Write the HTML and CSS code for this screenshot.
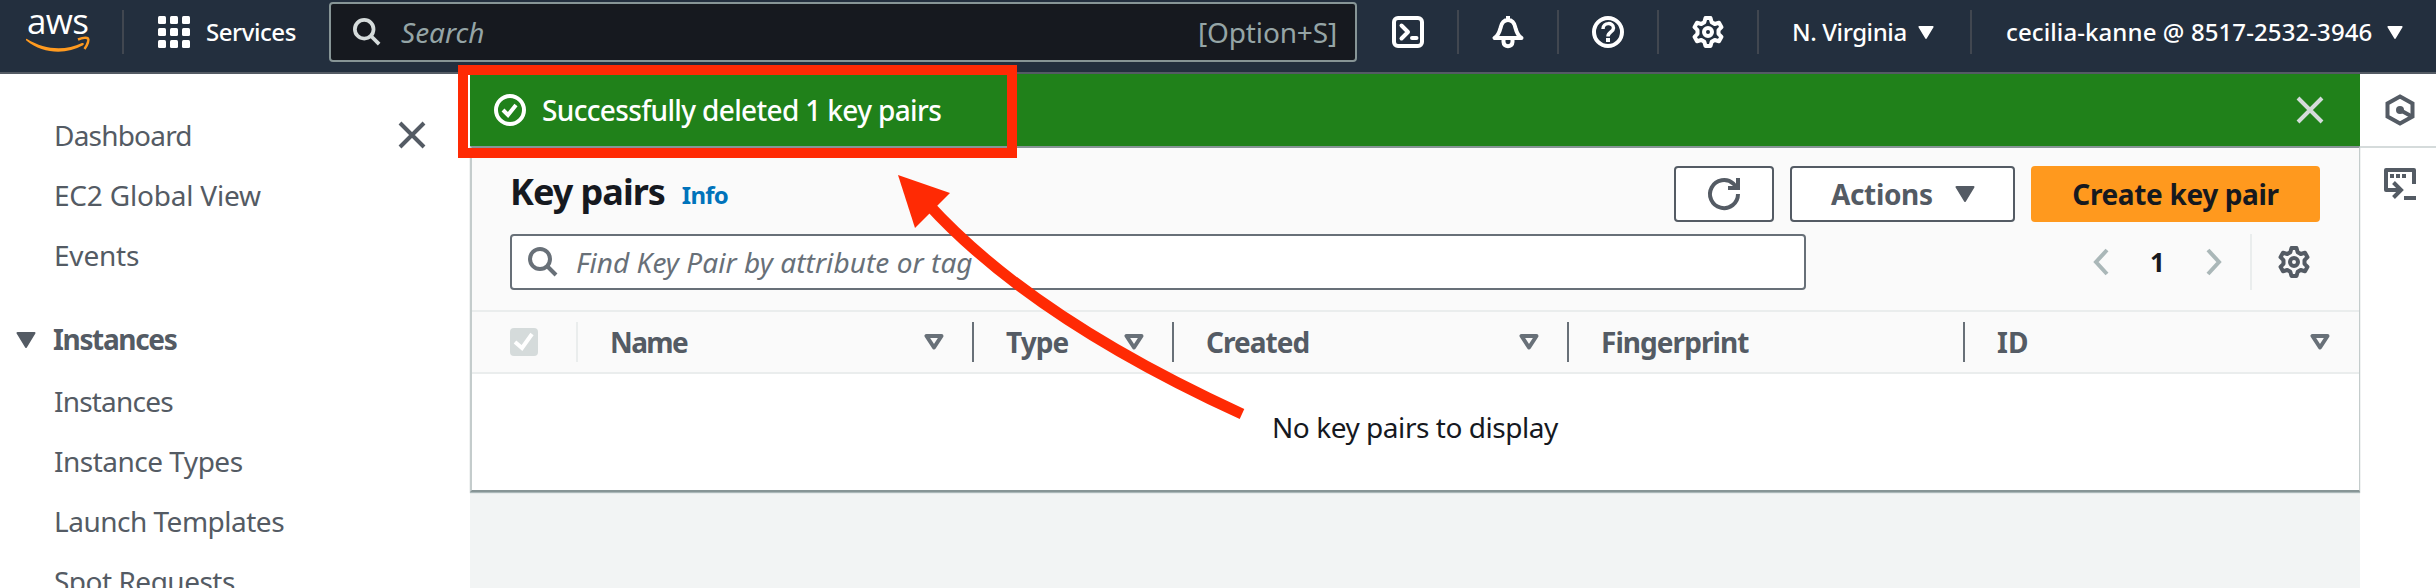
FILE: index.html
```html
<!DOCTYPE html>
<html lang="en">
<head>
<meta charset="utf-8">
<title>Key pairs | EC2</title>
<link rel="stylesheet" href="styles.css">
</head>
<body>
<svg class="defs" width="0" height="0">
  <symbol id="gear" viewBox="0 0 32 32"><path d="M13.500 2h5l1.200 4.200 3 1.800 4.300-1.200 2.500 4.400-3 3v3.600l3 3-2.500 4.400-4.300-1.200-3 1.800L18.500 30h-5l-1.200-4.200-3-1.800L5 25.200l-2.500-4.400 3-3v-3.600l-3-3L5 6.800 9.300 8l3-1.800z" fill="none" stroke="currentColor" stroke-width="4" stroke-linejoin="round"/><circle cx="16" cy="16" r="4" fill="none" stroke="currentColor" stroke-width="4"/></symbol>
  <symbol id="search" viewBox="0 0 30 30"><circle cx="12" cy="12" r="10" fill="none" stroke="currentColor" stroke-width="4"/><path d="M19 19l9 9" stroke="currentColor" stroke-width="4"/></symbol>
  <symbol id="close" viewBox="0 0 28 28"><path d="M2 2l24 24M26 2L2 26" stroke="currentColor" stroke-width="4" fill="none"/></symbol>
  <symbol id="caret" viewBox="0 0 20 16"><path d="M1.500 1h17L10 15z" fill="currentColor" stroke="currentColor" stroke-width="2" stroke-linejoin="round"/></symbol>
  <symbol id="sort" viewBox="0 0 20 16"><path d="M2.500 2h15L10 13.500z" fill="none" stroke="currentColor" stroke-width="4" stroke-linejoin="round"/></symbol>
</svg>
<header class="nav">
  <div class="brand"><span class="aws">aws</span>
    <svg class="smile" viewBox="0 0 64 16"><path d="M1 2c18 11 38 12 55 4 2-.5 2.500 1 1 2.200C40 18 17 17 .3 3.500c-.8-1 0-2 .7-1.500z" fill="#ff9a1f"/><path d="M52 2.500c5-2 9-2 10-1s0 6-3.500 10.500" fill="none" stroke="#ff9a1f" stroke-width="2.500"/></svg>
  </div>
  <i class="rule"></i>
  <svg class="grid" viewBox="0 0 32 32" fill="#fff"><rect width="8" height="8" rx="1.500"/><rect x="12" width="8" height="8" rx="1.500"/><rect x="24" width="8" height="8" rx="1.500"/><rect y="12" width="8" height="8" rx="1.500"/><rect x="12" y="12" width="8" height="8" rx="1.500"/><rect x="24" y="12" width="8" height="8" rx="1.500"/><rect y="24" width="8" height="8" rx="1.500"/><rect x="12" y="24" width="8" height="8" rx="1.500"/><rect x="24" y="24" width="8" height="8" rx="1.500"/></svg>
  <span class="services">Services</span>
  <div class="search"><svg class="s-icon"><use href="#search"/></svg><span class="s-text">Search</span><span class="s-key">[Option+S]</span></div>
  <div class="tools">
    <div class="tool"><svg viewBox="0 0 32 32"><rect x="2" y="2" width="28" height="28" rx="4"/><path d="M9.500 9.500L16 16l-6.500 6.500" stroke-linecap="round" stroke-linejoin="round"/><path d="M20 22h4.500" stroke-linecap="round"/></svg></div>
    <div class="tool"><svg viewBox="0 0 32 32"><path d="M16 0v4M2.500 22h27c-4-2.500-5-6-6-10-1-5-4-8-7.500-8s-6.500 3-7.500 8c-1 4-2 7.500-6 10z" stroke-linejoin="round"/><path d="M11.500 23v3c0 5.500 9 5.500 9 0v-3" stroke-width="4"/></svg></div>
    <div class="tool"><svg viewBox="0 0 32 32"><circle cx="16" cy="16" r="14"/><path d="M11 13c0-7 10.500-7 10.500-1 0 4-5.500 4-5.500 8.500" stroke-width="3.500"/><path d="M16 22v4"/></svg></div>
    <div class="tool"><svg><use href="#gear"/></svg></div>
  </div>
  <span class="region">N. Virginia</span><svg class="mini"><use href="#caret"/></svg>
  <i class="rule rule2"></i>
  <span class="account">cecilia-kanne @ 8517-2532-3946</span><svg class="mini"><use href="#caret"/></svg>
</header>
<div class="body">
  <nav class="side">
    <div class="link"><span class="tight-3">Dashboard</span><svg class="x"><use href="#close"/></svg></div>
    <div class="link"><span class="tight-1">EC2 Global View</span></div>
    <div class="link"><span class="tight-1">Events</span></div>
    <div class="group"><svg class="tri"><use href="#caret"/></svg><span class="tight-4">Instances</span></div>
    <div class="link"><span class="tight-3">Instances</span></div>
    <div class="link"><span class="tight-2">Instance Types</span></div>
    <div class="link"><span class="tight-2">Launch Templates</span></div>
    <div class="link"><span class="tight-2">Spot Requests</span></div>
  </nav>
  <main class="main">
    <div class="flash">
      <svg class="ok" viewBox="0 0 32 32" fill="none" stroke="#fff" stroke-width="4"><circle cx="16" cy="16" r="14"/><path d="M9 16l5 5 8-10"/></svg>
      <span class="flash-text">Successfully deleted 1 key pairs</span>
      <svg class="flash-x"><use href="#close"/></svg>
    </div>
    <section class="panel">
      <div class="title-row">
        <h1 class="title">Key pairs</h1><a class="info">Info</a>
        <div class="actions">
          <div class="btn refresh"><svg viewBox="0 0 32 32" fill="none" stroke="#545b64" stroke-width="4"><path d="M30 16a14 14 0 1 1-4.500-10.200l3 3.500"/><path d="M30 0v10H20"/></svg></div>
          <div class="btn act"><span>Actions</span><svg class="tri"><use href="#caret"/></svg></div>
          <div class="btn create"><span>Create key pair</span></div>
        </div>
      </div>
      <div class="filter-row">
        <div class="filter"><svg class="f-icon"><use href="#search"/></svg><span>Find Key Pair by attribute or tag</span></div>
        <div class="pager">
          <svg class="chev" viewBox="0 0 16 28"><path d="M14 2L3 14l11 12"/></svg><b class="page">1</b><svg class="chev" viewBox="0 0 16 28"><path d="M2 2l11 12L2 26"/></svg>
          <i class="vline"></i><svg class="cog"><use href="#gear"/></svg>
        </div>
      </div>
      <div class="thead">
        <div class="th check"><svg viewBox="0 0 28 28"><rect width="28" height="28" rx="4" fill="#d5dbdb"/><path d="M5 14l7 6L22 6" fill="none" stroke="#fff" stroke-width="4"/></svg></div>
        <div class="th"><span class="name">Name</span><svg class="tri"><use href="#sort"/></svg></div>
        <div class="th"><span>Type</span><svg class="tri"><use href="#sort"/></svg></div>
        <div class="th"><span>Created</span><svg class="tri"><use href="#sort"/></svg></div>
        <div class="th"><span>Fingerprint</span></div>
        <div class="th last"><span>ID</span><svg class="tri"><use href="#sort"/></svg></div>
      </div>
      <div class="empty"><span>No key pairs to display</span></div>
    </section>
  </main>
  <aside class="rail">
    <div class="rail-item"><svg viewBox="0 0 32 32" fill="none" stroke="#545b64" stroke-width="4"><path d="M16 2.500l12.500 7v13L16 29.500l-12.500-7v-13z"/><circle cx="16" cy="16" r="4" fill="#545b64" stroke="none"/><path d="M16 16l11 6"/></svg></div>
    <div class="rail-item"><svg viewBox="0 0 32 32" fill="none" stroke="#545b64" stroke-width="4"><path d="M30 16V2H2v20h14" stroke-linejoin="round"/><path d="M9.500 14.500L17 22l-7.500 7.500"/><path d="M20 30h12"/><path d="M6 8h4M12 8h4M18 8h4"/></svg></div>
  </aside>
</div>
<div class="callout"></div>
<svg class="arrow" viewBox="0 0 360 260"><path d="M38 39Q142 153 352 249" fill="none" stroke="#ff2a04" stroke-width="11"/><path d="M8 10l52 18-35 35z" fill="#ff2a04"/></svg>
</body>
</html>
```
FILE: styles.css
```css
* { box-sizing: border-box; }
body { margin: 0; width: 2436px; height: 588px; overflow: hidden; position: relative; background: #fff; font: 28px/40px "Noto Sans", "Open Sans", sans-serif; color: #16191f; white-space: nowrap; }
svg { display: block; flex: none; overflow: visible; }
span, a, h1 { display: block; flex: none; }
.defs { position: absolute; }
.tight-1 { letter-spacing: -0.2px; }
.tight-2 { letter-spacing: -0.5px; }
.tight-3 { letter-spacing: -0.8px; }
.tight-4 { letter-spacing: -1.35px; }
.nav { height: 74px; background: #232f3e; border-bottom: 2px solid #545b64; display: flex; align-items: flex-start; color: #fff; font-size: 24px; font-weight: 500; }
.brand { width: 122px; height: 72px; padding: 2px 0 0 26px; }
.aws { font: 500 35px/35px "Open Sans", sans-serif; height: 35px; letter-spacing: -0.6px; margin-left: 1px; padding-top: 1px; }
.smile { width: 64px; height: 16px; }
.rule { width: 2px; height: 44px; margin-top: 10px; background: #414750; flex: none; }
.grid { width: 32px; height: 32px; margin: 16px 16px 0 34px; }
.services { margin-top: 12px; width: 123px; letter-spacing: -0.45px; }
.search { width: 1028px; height: 60px; margin-top: 2px; border: 2px solid #879596; border-radius: 4px; background: #16191f; color: #95a5a6; font-size: 28px; font-weight: 400; display: flex; align-items: center; padding: 0 18px 0 22px; }
.s-icon { width: 28px; height: 28px; color: #d5dbdb; }
.s-text { margin-left: 20px; font-style: italic; }
.s-key { margin-left: auto; letter-spacing: -0.15px; }
.tools { display: flex; margin-left: 2px; }
.tool { width: 100px; height: 44px; margin-top: 10px; border-right: 2px solid #414750; padding: 6px 0 0 33px; }
.tool svg { width: 32px; height: 32px; fill: none; stroke: #fff; stroke-width: 4; }
.region { width: 126px; margin: 12px 0 0 33px; letter-spacing: -0.4px; }
.mini { width: 16px; height: 13px; margin-top: 26px; }
.rule2 { margin-left: 36px; }
.account { width: 381px; margin: 12px 0 0 34px; letter-spacing: 0.1px; }
.body { display: flex; height: 514px; }
.side { width: 470px; padding-top: 31px; color: #545b64; flex: none; }
.link { height: 60px; line-height: 60px; padding-left: 54px; display: flex; }
.x { width: 28px; height: 28px; margin: 16px 44px 0 auto; }
.group { height: 62px; margin-top: 24px; padding: 0 0 0 16px; line-height: 60px; display: flex; font-weight: 700; }
.tri { width: 20px; height: 16px; }
.group .tri { margin: 23px 17px 0 0; }
.main { width: 1890px; background: #f2f4f4; flex: none; }
.flash { height: 72px; background: #20811a; color: #fff; display: flex; align-items: center; padding: 0 36px 0 24px; font-weight: 500; }
.flash-text { letter-spacing: -0.65px; }
.ok { width: 32px; height: 32px; margin-right: 16px; }
.flash-x { width: 28px; height: 28px; margin-left: auto; color: #d5dbdb; }
.panel { height: 346px; border-top: 2px solid #879596; border-left: 2px solid #c4cccc; border-right: 1px solid #c4cccc; border-bottom: 2px solid #879596; background: #fafafa; box-shadow: 0 1px 1px #aab7b8; }
.title-row { height: 74px; padding: 18px 39px 0 38px; display: flex; }
.title { margin: -2px 0 0; font: 700 36px/56px "Noto Sans", sans-serif; letter-spacing: -1px; }
.info { margin: 9px 0 0 17px; font-size: 24px; font-weight: 700; color: #0073bb; letter-spacing: -0.8px; }
.actions { display: flex; gap: 16px; margin-left: auto; }
.btn { height: 56px; border: 2px solid #545b64; border-radius: 4px; background: #fff; color: #545b64; font-weight: 700; display: flex; align-items: center; letter-spacing: -0.35px; }
.refresh { width: 100px; padding: 0 32px; }
.refresh svg { width: 32px; height: 32px; }
.act { width: 225px; padding: 0 38px 0 39px; justify-content: space-between; }
.create { width: 289px; background: #ff991e; border-color: #ff991e; color: #16191f; justify-content: center; }
.filter-row { height: 88px; padding: 12px 49px 0 38px; display: flex; }
.filter { width: 1296px; height: 56px; border: 2px solid #687078; border-radius: 4px; background: #fff; color: #687078; font-style: italic; display: flex; align-items: center; padding-left: 16px; letter-spacing: 0.06px; }
.f-icon { width: 30px; height: 30px; margin-right: 18px; }
.pager { margin-left: auto; display: flex; align-items: center; height: 56px; }
.chev { width: 16px; height: 28px; fill: none; stroke: #aab7b8; stroke-width: 4; }
.page { width: 97px; text-align: center; font-size: 26px; }
.vline { width: 2px; height: 56px; background: #eaeded; margin: 0 26px 0 28px; }
.cog { width: 32px; height: 32px; color: #545b64; }
.thead { height: 64px; border-top: 2px solid #eaeded; border-bottom: 2px solid #eaeded; display: grid; grid-template-columns: 106px 396px 200px 395px 396px 1fr; color: #545b64; font-weight: 700; padding-top: 10px; letter-spacing: -0.95px; }
.name { letter-spacing: -1.6px; }
.th { height: 40px; border-right: 2px solid #687078; padding: 0 28px 0 32px; display: flex; align-items: center; justify-content: space-between; }
.check { border-color: #eaeded; padding-left: 38px; }
.check svg { width: 28px; height: 28px; }
.th .tri { color: #687078; }
.last { border: 0; padding-right: 29px; letter-spacing: 0; }
.empty { height: 116px; background: #fff; padding: 33px 0 0 800px; letter-spacing: -0.45px; }
.rail { flex: 1; }
.rail-item { height: 74px; border-bottom: 2px solid #d5dbdb; padding: 20px 24px; }
.rail-item + .rail-item { border: 0; }
.rail svg { width: 32px; height: 32px; }
.callout { position: absolute; left: 458px; top: 65px; width: 559px; height: 93px; border: 10px solid #ff2a04; }
.arrow { position: absolute; left: 890px; top: 165px; width: 360px; height: 260px; }
```
